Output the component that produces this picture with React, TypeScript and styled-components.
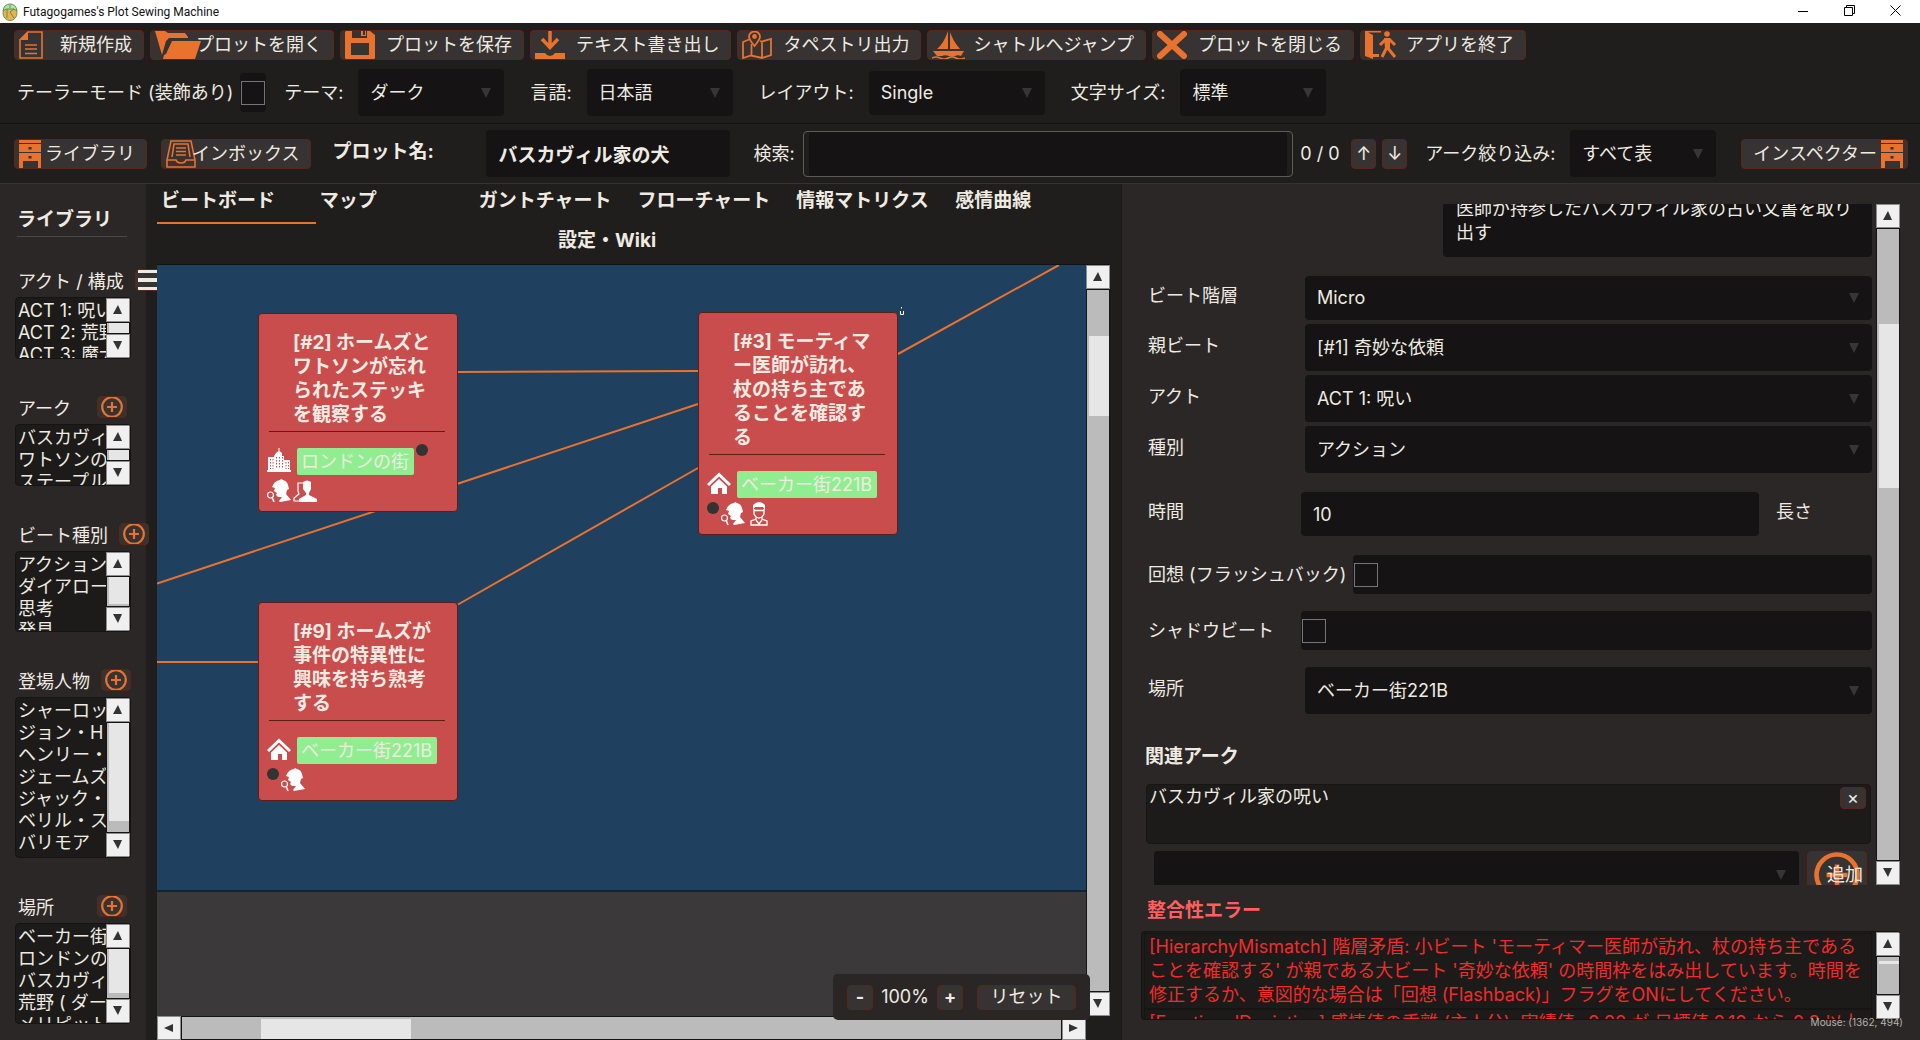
import React from "react";
import styled, { createGlobalStyle, css } from "styled-components";

const color = {
  page: "#1f1e1c",
  panel: "#2b2726",
  field: "#151314",
  list: "#1c1b19",
  button: "#373332",
  buttonEdge: "#5c2614",
  text: "#efebe2",
  accent: "#e8722e",
  board: "#20405f",
  card: "#ca4d4d",
  cardEdge: "#5a2015",
  error: "#f02c2c",
};

const GlobalStyle = createGlobalStyle`
  * { box-sizing: border-box; }
  html, body { margin: 0; height: 100%; background: ${color.page}; }
  body, button, input, select, textarea {
    font-family: Inter, "Noto Sans CJK JP", sans-serif;
    font-size: 18px;
    line-height: 24px;
    color: ${color.text};
  }
  ul { margin: 0; padding: 0; list-style: none; }
  svg { display: block; flex: none; }
`;

/* ---------- shell ---------- */

const Shell = styled.div`
  position: relative;
  display: flex;
  flex-direction: column;
  height: 100vh;
  min-height: 1040px;
  overflow: hidden;
`;

const TitleBar = styled.header`
  display: flex;
  align-items: center;
  gap: 5px;
  height: 23px;
  flex: none;
  padding: 0 2px;
  background: #fff;
`;

const WindowTitle = styled.h1`
  margin: 0;
  flex: 1;
  font: 400 12px/20px Roboto, "Noto Sans", sans-serif;
  color: #111;
`;

const WindowButtons = styled.div`
  display: flex;
`;

const WindowButton = styled.button`
  display: grid;
  place-items: center;
  width: 46px;
  height: 22px;
  padding: 0 0 2px;
  border: 0;
  background: none;
`;

const ButtonBar = styled.nav`
  display: flex;
  flex: none;
  gap: 6px;
  padding: 7px 14px 0;
`;

const SettingsBar = styled.div`
  display: flex;
  flex: none;
  align-items: center;
  gap: 26px;
  padding: 9px 18px 7px;
  border-bottom: 1px solid #121111;
`;

const PlotBar = styled.div`
  display: flex;
  flex: none;
  align-items: center;
  padding: 6px 12px 6px 14px;
  border-bottom: 1px solid #353432;
`;

const Setting = styled.div<{ $gap?: number }>`
  display: flex;
  align-items: center;
  gap: ${(p) => p.$gap ?? 15}px;
`;

const TailorSetting = styled(Setting)`
  margin: 0 -8px 0 -1px;
`;

const Workspace = styled.div`
  display: grid;
  flex: 1;
  min-height: 0;
  grid-template-columns: 146px minmax(0, 975fr) minmax(0, 799fr);
`;

/* ---------- controls ---------- */

const ToolButton = styled.button<{ $pad: number }>`
  display: grid;
  grid-template-columns: ${(p) => p.$pad}px auto;
  align-items: center;
  height: 30px;
  flex: none;
  padding: 0 11px 0 0;
  border: 1px solid ${color.buttonEdge};
  border-radius: 4px;
  background: ${color.button};
  white-space: nowrap;
`;

/* wide icons run on under the caption */
const ToolIcon = styled.span`
  width: 0;
  height: 28px;
  margin-left: 4px;
`;

const InspectorButton = styled.button`
  display: flex;
  align-items: center;
  gap: 4px;
  height: 30px;
  flex: none;
  margin-left: 25px;
  padding: 0 4px 0 11px;
  border: 1px solid ${color.buttonEdge};
  border-radius: 4px;
  background: ${color.button};
  white-space: nowrap;
`;

const SmallButton = styled.button<{ $w: number; $h: number }>`
  display: grid;
  place-content: center;
  flex: none;
  width: ${(p) => p.$w}px;
  height: ${(p) => p.$h}px;
  padding: 0;
  border: 1px solid ${color.buttonEdge};
  border-radius: 4px;
  background: ${color.button};
  overflow: hidden;
`;

const SelectFrame = styled.div<{ $w?: number; $h?: number; $indent?: boolean }>`
  display: grid;
  align-items: center;
  height: ${(p) => p.$h ?? 47}px;
  ${(p) => (p.$w ? css`width: ${p.$w}px; flex: none;` : css`flex: 1; min-width: 0;`)}
  margin-left: ${(p) => (p.$indent ? 4 : 0)}px;
  border-radius: 4px;
  background: ${color.field};
  & > * { grid-area: 1 / 1; }
  & > svg { justify-self: end; margin-right: 13px; pointer-events: none; }
`;

const NativeSelect = styled.select`
  width: 100%;
  height: 100%;
  padding: 0 30px 0 12px;
  border: 0;
  border-radius: 4px;
  appearance: none;
  background: none;
`;

const TextInput = styled.input<{ $bold?: boolean; $w?: number; $h?: number }>`
  height: ${(p) => p.$h ?? 47}px;
  ${(p) => (p.$w ? css`width: ${p.$w}px; flex: none;` : css`flex: 1; min-width: 0;`)}
  padding: 0 12px;
  border: 0;
  border-radius: 4px;
  background: ${color.field};
  ${(p) => p.$bold && css`font-size: 19px; font-weight: 700;`}
`;

const CheckField = styled.span<{ $fill?: boolean }>`
  display: flex;
  align-items: center;
  height: 39px;
  padding: 0 1px;
  border-radius: 4px;
  background: ${color.field};
  ${(p) => p.$fill && css`flex: 1;`}
`;

const Check = styled.input`
  appearance: none;
  width: 24px;
  height: 24px;
  margin: 0;
  border: 1px solid #77757a;
  background: ${color.field};
`;

const PlotLabel = styled.label`
  width: 154px;
  flex: none;
  margin-left: 21px;
  padding-bottom: 4px;
  font-size: 19px;
  font-weight: 700;
`;

const SearchFrame = styled.div`
  display: flex;
  flex: 1;
  min-width: 0;
  height: 46px;
  margin: 0 7px 0 8px;
  padding: 0 5px;
  border: 1px solid #5c5b59;
  border-radius: 4px;
`;

const SearchInput = styled(TextInput)`
  height: 100%;
  border-radius: 2px;
`;

const Matches = styled.output`
  width: 51px;
  flex: none;
`;

const Steps = styled.div`
  display: flex;
  gap: 6px;
  margin-right: 18px;
`;

const SearchLabel = styled.label`
  flex: none;
  margin-left: 23px;
`;

/* ---------- scroll bars ---------- */

const Bar = styled.div<{ $across?: boolean }>`
  display: grid;
  ${(p) =>
    p.$across
      ? css`grid-template-columns: 24px 1fr 24px; height: 24px;`
      : css`grid-template-rows: 24px 1fr 24px; width: 24px;`}
`;

const BarButton = styled.button`
  display: grid;
  place-items: center;
  padding: 0;
  border: 1px solid #8c8c8c;
  background: #f0f0f0;
`;

const Track = styled.div`
  display: grid;
  border: 1px solid #141414;
  background: #bbbbbb;
  min-height: 0;
`;

const Thumb = styled.div`
  background: #e6e6e6;
`;

type ScrollBarProps = { across?: boolean; from: number; to: number };

/* from and to are the thumb's ends, in percent of the track */
function ScrollBar({ across, from, to }: ScrollBarProps) {
  const paths = across
    ? ["M9 1v8L0 5z", "M0 1v8l9-4z"]
    : ["M0 9h9L5 0z", "M0 0h9L5 9z"];
  const thumb = across
    ? { marginLeft: `${from}%`, width: `${to - from}%`, marginTop: 2 }
    : { alignSelf: "start", height: `${to - from}%`, position: "relative" as const, top: `${from}%`, marginLeft: 2 };
  return (
    <Bar $across={across}>
      <BarButton aria-label={across ? "左へ" : "上へ"}>
        <svg width="10" height="10"><path d={paths[0]} fill="#333" /></svg>
      </BarButton>
      <Track><Thumb style={thumb} /></Track>
      <BarButton aria-label={across ? "右へ" : "下へ"}>
        <svg width="10" height="10"><path d={paths[1]} fill="#333" /></svg>
      </BarButton>
    </Bar>
  );
}

/* ---------- icons ---------- */

const Arrow = () => (
  <svg width="10" height="10"><path d="M0 0h10L5 10z" fill="#373637" /></svg>
);

const LogoIcon = () => (
  <svg width="16" height="18" viewBox="0 0 16 18">
    <ellipse cx="8" cy="10" rx="7" ry="7.5" fill="#eeb04f" stroke="#6d9b4c" />
    <path d="M1 8Q2 1 8 1t7 7Q12 5 8 6 4 5 1 8z" fill="#b9dfa8" stroke="#4f9a58" />
    <path d="M5 6v9M8 9l4-3M8 9l4 6M8 2v3" stroke="#4f9a58" fill="none" />
  </svg>
);

const NewIcon = () => (
  <svg width="24" height="28" viewBox="0 0 24 28">
    <path d="M9 1H23V27H1V9z" fill="none" stroke={color.accent} strokeWidth="1.6" />
    <path d="M9 0V9H0z" fill={color.accent} />
    <path d="M6 14H18M6 18H18M6 22.500H18" stroke={color.accent} strokeWidth="1.5" />
  </svg>
);

const OpenIcon = () => (
  <svg width="46" height="28" viewBox="0 0 46 28">
    <path d="M0 0H10L13 2H30L33 6V7H14L11 10 7 24z" fill={color.accent} />
    <path d="M17 10H46L40 28H8L9 24 11 23z" fill={color.accent} />
    <path d="M9 22 14 10" stroke={color.button} strokeWidth="1.500" />
  </svg>
);

const SaveIcon = () => (
  <svg width="30" height="28" viewBox="0 0 30 28">
    <path d="M1 0H7V7H22V0H25L30 4V27L29 28H1L0 27V1z" fill={color.accent} />
    <path d="M16 0H21V5H16z" fill={color.accent} />
    <path d="M18 0H20V4H18z" fill={color.button} />
    <path d="M6 12H24V24H6z" fill={color.button} />
  </svg>
);

const ExportIcon = () => (
  <svg width="30" height="28" viewBox="0 0 30 28">
    <path d="M15 0V16M7 8 15 16.500 23 8" fill="none" stroke={color.accent} strokeWidth="3.500" />
    <path d="M0 22H10Q12 25 15 25T20 22H30V28H0z" fill={color.accent} />
  </svg>
);

const MapIcon = () => (
  <svg width="30" height="28" viewBox="0 0 30 28" fill="none" stroke={color.accent} strokeWidth="1.800">
    <path d="M7 8.500 1 11V27L9 24.500 20 27 29 24V8L20 10.500 18 10M9.500 13V24.500M20 11V27" />
    <path d="M12.500 15Q7 8.500 7 5.500A5.500 5 0 0 1 18 5.500Q18 8.500 12.500 15z" />
    <circle cx="12.500" cy="5.500" r="1.500" fill={color.accent} />
  </svg>
);

const BoatIcon = () => (
  <svg width="33" height="28" viewBox="0 0 33 28">
    <path d="M16 0V18H5Q12 12 16 0zM18 1Q21 10 28 18H18z" fill={color.accent} />
    <path d="M1 20H32L29 25Q26 23.500 23 25 20 26.500 17 25 13 23.500 10 25L5 25z" fill={color.accent} />
    <path d="M0 27Q4 25 8 27T16 27 24 27 33 27" fill="none" stroke={color.accent} strokeWidth="1.500" />
  </svg>
);

const CloseIcon = () => (
  <svg width="30" height="28" viewBox="0 0 30 28">
    <path d="M3 3 27 25M27 3 3 25" stroke={color.accent} strokeWidth="6" strokeLinecap="round" />
  </svg>
);

const ExitIcon = () => (
  <svg width="32" height="28" viewBox="0 0 32 28">
    <path d="M0 0 8 4V28L0 25zM0 0H16V1.500H0zM8 23H14V26H8z" fill={color.accent} />
    <circle cx="22" cy="3" r="2.800" fill={color.accent} />
    <path d="M23 9 22 17M21 8 15 14M24 8 30 14M22 16 17 26M22 16 30 26" stroke={color.accent} strokeWidth="3" fill="none" />
    <path d="M19 7H25L25 17H20z" fill={color.accent} />
  </svg>
);

const CabinetIcon = () => (
  <svg width="22" height="28" viewBox="0 0 22 28">
    <path d="M0 0H22V3H0zM0 4H22V12H0zM0 13H22V28H19V21H4V28H0z" fill={color.accent} />
    <path d="M9.500 7H12.500V9.500H9.500zM9.500 16H12.500V18.500H9.500z" fill={color.button} />
  </svg>
);

const InboxIcon = () => (
  <svg width="30" height="28" viewBox="0 0 30 28" fill="none" stroke={color.accent} strokeWidth="1.600">
    <path d="M5 1H25L29 20V27H1V20z" />
    <path d="M1 20H10Q11 23 15 23T20 20H29M6 17 8 4H22L24 17M10 8H20M10 11.500H20M10 15H20" />
  </svg>
);

const PlusIcon = ({ size = 22 }: { size?: number }) => (
  <svg width={size} height={size} viewBox="0 0 22 22">
    <circle cx="11" cy="11" r="9.800" fill="none" stroke={color.accent} strokeWidth="2.200" />
    <path d="M11 6V16M6 11H16" stroke={color.accent} strokeWidth="2.200" />
  </svg>
);

const MenuIcon = () => (
  <svg width="24" height="20"><path d="M0 0H24V3H0zM0 8H24V12H0zM0 17H24V20H0z" fill={color.text} /></svg>
);

const CityIcon = () => (
  <svg width="24" height="24" viewBox="0 0 24 24">
    <path d="M11.500 0H12.500V3L15 5V8H17V12H23V22H24V24H0V22H1V9H7V8L9 5 11.500 3z" fill="#fff" />
    <path d="M9.500 9V21M12.500 9V21M15.500 9V21M3.500 11V21M6 11V21M19 14V21M21.500 14V21" stroke={color.card} strokeWidth="1" strokeDasharray="1.500 1.500" />
  </svg>
);

const HouseIcon = () => (
  <svg width="24" height="24" viewBox="0 0 24 24">
    <path d="M1 14 12 3.500 23 14" fill="none" stroke="#fff" strokeWidth="3" />
    <path d="M12 8 20 15.500V23H15V17H11V23H4V15.500z" fill="#fff" />
  </svg>
);

const DetectiveIcon = () => (
  <svg width="24" height="24" viewBox="0 0 24 24">
    <path d="M13 1 14 0 16 1Q20 2 21 6L22 10 20 11 19 15 24 21 13 23 12 22 15 18H11L9 16 10 14 7 12 8 9 5 8Q7 2 13 1z" fill="#fff" />
    <circle cx="3.500" cy="16" r="3" fill="none" stroke="#fff" strokeWidth="1.200" />
    <path d="M5 18 7 23" stroke="#fff" strokeWidth="1.500" />
  </svg>
);

const PairIcon = () => (
  <svg width="24" height="24" viewBox="0 0 24 24">
    <path d="M10 4H5V12L6 15 1 19V22H9" fill="none" stroke="#fff" strokeWidth="1.200" />
    <path d="M10 3Q14 0 18 3V10L16 14V16L24 20V23H6V20L13 16V14L10 10z" fill="#fff" />
  </svg>
);

const DoctorIcon = () => (
  <svg width="24" height="24" viewBox="0 0 24 24">
    <path d="M6 8V3Q9 0 12 0T18 3V8L16 5H8z" fill="#fff" />
    <path d="M7 7V12Q9 16 12 16T17 12V7M7 8.500H17M9 15V17L4 19V23H20V19L15 17V15M9 18 12 22 15 18" fill="none" stroke="#fff" strokeWidth="1.300" />
  </svg>
);

/* ---------- library ---------- */

const Library = styled.aside`
  position: relative;
  z-index: 1;
  display: flex;
  flex-direction: column;
  gap: 36px;
  padding: 24px 15px 0;
  background: ${color.panel};
`;

const LibraryTitle = styled.h2`
  width: 110px;
  margin: 0 0 -4px 2px;
  padding: 0 0 4px;
  border-bottom: 1px solid #4a4846;
  font-size: 19px;
  line-height: 24px;
`;

const ListHead = styled.div`
  display: flex;
  gap: 11px;
  height: 28px;
  padding-left: 3px;
  white-space: nowrap;
`;

const ListSection = styled.section`
  padding-bottom: 1px;
`;

const ListName = styled.h3`
  flex: none;
  min-width: 68px;
  margin: 0;
  font-size: 18px;
  font-weight: 400;
  line-height: 26px;
`;

const ListBox = styled.div<{ $h: number }>`
  display: grid;
  grid-template-columns: minmax(0, 1fr) 24px;
  width: 116px;
  height: ${(p) => p.$h}px;
  border: 1px solid #151413;
  border-radius: 4px;
  background: ${color.list};
  overflow: hidden;
`;

const ListItems = styled.ul`
  height: 100%;
  min-height: 0;
  padding: 2px 0 0 2px;
  overflow: hidden;
  white-space: nowrap;
  line-height: 22px;
`;

type Section = { name: string; menu?: boolean; height: number; from: number; to: number; items: string[] };

const sections: Section[] = [
  { name: "アクト / 構成", menu: true, height: 62, from: 0, to: 100, items: ["ACT 1: 呪い", "ACT 2: 荒野", "ACT 3: 魔犬"] },
  { name: "アーク", height: 62, from: 0, to: 100, items: ["バスカヴィル家の呪い", "ワトソンの調査", "ステープルトン"] },
  { name: "ビート種別", height: 81, from: 0, to: 92, items: ["アクション", "ダイアローグ", "思考", "発見"] },
  {
    name: "登場人物", height: 161, from: 0, to: 90,
    items: ["シャーロック", "ジョン・H", "ヘンリー・", "ジェームズ", "ジャック・", "ベリル・ス", "バリモア"],
  },
  { name: "場所", height: 101, from: 0, to: 90, items: ["ベーカー街", "ロンドンの街", "バスカヴィル", "荒野 ( ダー", "メリピット"] },
];

/* ---------- board ---------- */

const BoardPane = styled.main`
  display: flex;
  flex-direction: column;
  min-width: 0;
  min-height: 0;
  padding: 0 11px;
`;

const Tabs = styled.div`
  display: flex;
  flex-wrap: wrap;
  flex: none;
  justify-content: center;
`;

const Tab = styled.button<{ $on?: boolean }>`
  flex: 0 0 calc(100% / 6);
  height: 40px;
  padding: 0 0 4px 4px;
  border: 0;
  border-bottom: 2px solid ${(p) => (p.$on ? color.accent : "transparent")};
  background: none;
  font-size: 19px;
  font-weight: 700;
  text-align: left;
  white-space: nowrap;
`;

const BoardFrame = styled.div`
  position: relative;
  z-index: 2;
  display: grid;
  flex: 1;
  min-height: 0;
  grid-template: minmax(0, 1fr) 24px / minmax(0, 1fr) 24px;
  border-top: 1px solid #121212;
`;

const Viewport = styled.div`
  position: relative;
  overflow: hidden;
  background: #3b3939;
`;

const Board = styled.div`
  position: relative;
  height: 627px;
  border-bottom: 2px solid #142232;
  background: ${color.board};
`;

const Wires = styled.svg`
  position: absolute;
  inset: 0;
  width: 100%;
  height: 100%;
`;

const CardBox = styled.article<{ $x: number; $y: number }>`
  position: absolute;
  left: ${(p) => p.$x}px;
  top: ${(p) => p.$y}px;
  width: 200px;
  padding: 17px 11px 8px 8px;
  border: 1px solid ${color.cardEdge};
  border-radius: 4px;
  background: ${color.card};
`;

const CardTitle = styled.h3`
  margin: 0 1px 0 2px;
  padding: 0 2px 4px 24px;
  border-bottom: 1px solid ${color.cardEdge};
  font-size: 19px;
  line-height: 24px;
  line-break: anywhere;
`;

const CardTags = styled.div`
  display: flex;
  flex-wrap: wrap;
  align-items: flex-start;
  gap: 4px 2px;
  margin-top: 12px;
`;

const Place = styled.span`
  display: flex;
  gap: 6px;
  padding-top: 4px;
`;

const PlaceName = styled.span`
  height: 27px;
  padding: 0 5px 0 4px;
  border-radius: 2px;
  background: #90ee90;
  line-height: 27px;
`;

const Dot = styled.span`
  width: 12px;
  height: 12px;
  border-radius: 50%;
  background: #333;
`;

const ZoomBox = styled.div`
  position: absolute;
  right: 20px;
  bottom: 20px;
  display: flex;
  align-items: center;
  height: 46px;
  padding: 0 14px;
  border-radius: 5px;
  background: #2a2625;
`;

const ZoomValue = styled.output`
  width: 64px;
  text-align: center;
`;

const ZoomButton = styled(SmallButton)`
  font-weight: 700;
`;

const ResetButton = styled(SmallButton)`
  margin-left: 14px;
`;

type CardData = { title: string; x: number; y: number; place: string; icon: React.ReactNode; people: React.ReactNode };

const cards: CardData[] = [
  { title: "[#2] ホームズとワトソンが忘れられたステッキを観察する", x: 101, y: 48, place: "ロンドンの街", icon: <CityIcon />, people: <><DetectiveIcon /><PairIcon /></> },
  { title: "[#3] モーティマー医師が訪れ、杖の持ち主であることを確認する", x: 541, y: 47, place: "ベーカー街221B", icon: <HouseIcon />, people: <><DetectiveIcon /><DoctorIcon /></> },
  { title: "[#9] ホームズが事件の特異性に興味を持ち熟考する", x: 101, y: 337, place: "ベーカー街221B", icon: <HouseIcon />, people: <DetectiveIcon /> },
];

/* ---------- inspector ---------- */

const Inspector = styled.aside`
  display: flex;
  flex-direction: column;
  min-width: 0;
  min-height: 0;
  padding: 20px 20px 20px 0;
  border-left: 1px solid #1a1918;
  background: ${color.panel};
`;

const InspectorScroll = styled.div`
  display: grid;
  grid-template-columns: minmax(0, 1fr) 24px;
  flex: 1;
  min-height: 0;
`;

const FormClip = styled.div`
  min-height: 0;
  overflow: hidden;
`;

const Form = styled.form`
  display: flex;
  flex-direction: column;
  gap: 19px;
  margin-top: -20px;
  padding: 0 4px 0 26px;
`;

const Stack = styled.div<{ $gap: number }>`
  display: flex;
  flex-direction: column;
  gap: ${(p) => p.$gap}px;
`;

const Row = styled.div`
  display: flex;
  align-items: center;
  gap: 7px;
`;

const RowLabel = styled.label<{ $level?: boolean }>`
  flex: none;
  min-width: 146px;
  padding-bottom: ${(p) => (p.$level ? 0 : 4)}px;
  white-space: nowrap;
`;

const LengthLabel = styled.span`
  width: 96px;
  margin-left: 10px;
  padding-bottom: 4px;
`;

const Summary = styled.textarea`
  display: block;
  height: 73px;
  margin-left: 295px;
  padding: 13px 13px 0;
  border: 0;
  border-radius: 4px;
  background: ${color.field};
  resize: none;
  overflow: hidden;
`;

const Related = styled.section`
  margin: 12px 0 0 -3px;
`;

const SubTitle = styled.h3<{ $error?: boolean }>`
  margin: ${(p) => (p.$error ? "14px 0 8px 25px" : "0 0 15px")};
  font-size: 19px;
  line-height: 24px;
  color: ${(p) => (p.$error ? "#ff5f5f" : color.text)};
`;

const RelatedList = styled.div`
  display: flex;
  align-items: flex-start;
  justify-content: space-between;
  height: 60px;
  margin: 0 1px;
  padding: 2px 4px 0 2px;
  border: 1px solid #171615;
  border-radius: 4px;
  background: ${color.list};
  line-height: 20px;
`;

const AddRow = styled.div`
  display: flex;
  gap: 8px;
  margin: 7px 5px 0 9px;
`;

const AddButton = styled.button`
  display: grid;
  align-items: center;
  width: 60px;
  height: 47px;
  padding: 0 3px 0 6px;
  border: 1px solid ${color.buttonEdge};
  border-radius: 4px;
  background: ${color.button};
  & > * { grid-area: 1 / 1; }
  & > span { justify-self: end; }
`;

const ErrorBox = styled.div`
  display: grid;
  grid-template-columns: minmax(0, 1fr) 24px;
  height: 89px;
  flex: none;
  margin-left: 19px;
  border: 1px solid #151413;
  border-right: 0;
  border-radius: 4px;
  background: ${color.list};
  overflow: hidden;
`;

const ErrorList = styled.ul`
  min-height: 0;
  padding: 1px 4px 0 2px;
  overflow: hidden;
`;

const ErrorItem = styled.li`
  padding: 1px 4px;
  border: 1px solid #161514;
  color: ${color.error};
`;

const MouseReadout = styled.div`
  position: absolute;
  right: 17px;
  bottom: 10px;
  font-size: 10px;
  line-height: 16px;
  color: #b5b1aa;
`;

/* ---------- parts ---------- */

type SelectProps = { id: string; value: string; w?: number; h?: number; indent?: boolean; label?: string };

function Select({ id, value, w, h, indent, label }: SelectProps) {
  return (
    <SelectFrame $w={w} $h={h} $indent={indent}>
      <NativeSelect id={id} aria-label={label} defaultValue={value}>
        <option>{value}</option>
      </NativeSelect>
      <Arrow />
    </SelectFrame>
  );
}

const tools: [React.ReactNode, string][] = [
  [<NewIcon />, "新規作成"],
  [<OpenIcon />, "プロットを開く"],
  [<SaveIcon />, "プロットを保存"],
  [<ExportIcon />, "テキスト書き出し"],
  [<MapIcon />, "タペストリ出力"],
  [<BoatIcon />, "シャトルへジャンプ"],
  [<CloseIcon />, "プロットを閉じる"],
  [<ExitIcon />, "アプリを終了"],
];

const settings: [string, string, string, number, number][] = [
  ["theme", "テーマ:", "ダーク", 146, 47],
  ["language", "言語:", "日本語", 146, 47],
  ["layout", "レイアウト:", "Single", 176, 44],
  ["textsize", "文字サイズ:", "標準", 146, 47],
];

const tabs = ["ビートボード", "マップ", "ガントチャート", "フローチャート", "情報マトリクス", "感情曲線", "設定・Wiki"];

const beatFields: [string, string, string, number][] = [
  ["level", "ビート階層", "Micro", 44],
  ["parent", "親ビート", "[#1] 奇妙な依頼", 47],
  ["act", "アクト", "ACT 1: 呪い", 47],
  ["kind", "種別", "アクション", 47],
];

const errors = [
  "[HierarchyMismatch] 階層矛盾: 小ビート 'モーティマー医師が訪れ、杖の持ち主であることを確認する' が親である大ビート '奇妙な依頼' の時間枠をはみ出しています。時間を修正するか、意図的な場合は「回想 (Flashback)」フラグをONにしてください。",
  "[EmotionalDeviation] 感情値の乖離 (主人公): 実績値 -0.20 が 目標値 0.10 から 0.3 以上離れています。",
];

export default function App() {
  return (
    <Shell>
      <GlobalStyle />
      <TitleBar>
        <LogoIcon />
        <WindowTitle>Futagogames's Plot Sewing Machine</WindowTitle>
        <WindowButtons>
          <WindowButton aria-label="最小化">
            <svg width="10" height="10"><path d="M0 5.500H10" stroke="#000" /></svg>
          </WindowButton>
          <WindowButton aria-label="元に戻す">
            <svg width="11" height="11" fill="none" stroke="#000"><path d="M.5 2.500H8.500V10.500H.5zM2.500 2.500V.5H10.500V8.500H8.500" /></svg>
          </WindowButton>
          <WindowButton aria-label="閉じる">
            <svg width="11" height="11" stroke="#000"><path d="M.5.5l10 10M10.500.5l-10 10" /></svg>
          </WindowButton>
        </WindowButtons>
      </TitleBar>

      <ButtonBar>
        {tools.map(([icon, name]) => (
          <ToolButton key={name} $pad={45}>
            <ToolIcon>{icon}</ToolIcon>
            {name}
          </ToolButton>
        ))}
      </ButtonBar>

      <SettingsBar>
        <TailorSetting $gap={7}>
          <label htmlFor="tailor">テーラーモード (装飾あり)</label>
          <CheckField><Check id="tailor" type="checkbox" /></CheckField>
        </TailorSetting>
        {settings.map(([id, name, value, w, h]) => (
          <Setting key={id}>
            <label htmlFor={id}>{name}</label>
            <Select id={id} value={value} w={w} h={h} />
          </Setting>
        ))}
      </SettingsBar>

      <PlotBar>
        <Setting $gap={14}>
          <ToolButton $pad={30}><ToolIcon><CabinetIcon /></ToolIcon>ライブラリ</ToolButton>
          <ToolButton $pad={30}><ToolIcon><InboxIcon /></ToolIcon>インボックス</ToolButton>
        </Setting>
        <PlotLabel htmlFor="plot">プロット名:</PlotLabel>
        <TextInput id="plot" $bold $w={244} defaultValue="バスカヴィル家の犬" />
        <SearchLabel htmlFor="search">検索:</SearchLabel>
        <SearchFrame><SearchInput id="search" /></SearchFrame>
        <Matches>0 / 0</Matches>
        <Steps>
          <SmallButton $w={25} $h={30}>↑</SmallButton>
          <SmallButton $w={25} $h={30}>↓</SmallButton>
        </Steps>
        <Setting>
          <label htmlFor="arc">アーク絞り込み:</label>
          <Select id="arc" value="すべて表" w={146} />
        </Setting>
        <InspectorButton>インスペクター<CabinetIcon /></InspectorButton>
      </PlotBar>

      <Workspace>
        <Library>
          <LibraryTitle>ライブラリ</LibraryTitle>
          {sections.map((s) => (
            <ListSection key={s.name}>
              <ListHead>
                <ListName>{s.name}</ListName>
                <SmallButton $w={30} $h={22} aria-label={s.menu ? "メニュー" : `${s.name}を追加`}>
                  {s.menu ? <MenuIcon /> : <PlusIcon />}
                </SmallButton>
              </ListHead>
              <ListBox $h={s.height}>
                <ListItems>{s.items.map((i) => <li key={i}>{i}</li>)}</ListItems>
                <ScrollBar from={s.from} to={s.to} />
              </ListBox>
            </ListSection>
          ))}
        </Library>

        <BoardPane>
          <Tabs role="tablist">
            {tabs.map((t, i) => (
              <Tab key={t} role="tab" aria-selected={i === 0} $on={i === 0}>{t}</Tab>
            ))}
          </Tabs>
          <BoardFrame>
            <Viewport>
              <Board>
                <Wires stroke={color.accent} strokeWidth="2" fill="none">
                  <path d="M301 107 541 106M0 318.500 541 139M301 339.500 541 203M0 397H101M741 89 902 0" />
                  <path d="M744.500 42V43.500M743.500 46V49.500H746.500V46" stroke="#fff" strokeWidth="1" />
                </Wires>
                {cards.map((c) => (
                  <CardBox key={c.title} $x={c.x} $y={c.y}>
                    <CardTitle>{c.title}</CardTitle>
                    <CardTags>
                      <Place>{c.icon}<PlaceName>{c.place}</PlaceName></Place>
                      <Dot />
                      {c.people}
                    </CardTags>
                  </CardBox>
                ))}
              </Board>
            </Viewport>
            <ScrollBar from={6.5} to={18} />
            <ScrollBar across from={9} to={26} />
            <ZoomBox>
              <ZoomButton $w={26} $h={25}>-</ZoomButton>
              <ZoomValue>100%</ZoomValue>
              <ZoomButton $w={26} $h={25}>+</ZoomButton>
              <ResetButton $w={99} $h={25}>リセット</ResetButton>
            </ZoomBox>
          </BoardFrame>
        </BoardPane>

        <Inspector>
          <InspectorScroll>
            <FormClip>
              <Form>
                <Summary aria-label="概要" defaultValue="医師が持参したバスカヴィル家の古い文書を取り出す" />
                <Stack $gap={4}>
                  {beatFields.map(([id, name, value, h]) => (
                    <Row key={id}>
                      <RowLabel htmlFor={id}>{name}</RowLabel>
                      <Select id={id} value={value} h={h} indent />
                    </Row>
                  ))}
                </Stack>
                <Row>
                  <RowLabel htmlFor="time">時間</RowLabel>
                  <TextInput id="time" $h={44} defaultValue="10" />
                  <LengthLabel>長さ</LengthLabel>
                </Row>
                <Stack $gap={17}>
                  <Row>
                    <RowLabel htmlFor="flashback" $level>回想 (フラッシュバック)</RowLabel>
                    <CheckField $fill><Check id="flashback" type="checkbox" /></CheckField>
                  </Row>
                  <Row>
                    <RowLabel htmlFor="shadow" $level>シャドウビート</RowLabel>
                    <CheckField $fill><Check id="shadow" type="checkbox" /></CheckField>
                  </Row>
                  <Row>
                    <RowLabel htmlFor="place">場所</RowLabel>
                    <Select id="place" value="ベーカー街221B" indent />
                  </Row>
                </Stack>
                <Related>
                  <SubTitle>関連アーク</SubTitle>
                  <RelatedList>
                    <span>バスカヴィル家の呪い</span>
                    <SmallButton type="button" $w={26} $h={22}>×</SmallButton>
                  </RelatedList>
                  <AddRow>
                    <Select id="arcs" label="アーク" value="" />
                    <AddButton type="button"><PlusIcon size={46} /><span>追加</span></AddButton>
                  </AddRow>
                </Related>
              </Form>
            </FormClip>
            <ScrollBar from={15} to={41} />
          </InspectorScroll>
          <SubTitle $error>整合性エラー</SubTitle>
          <ErrorBox>
            <ErrorList>{errors.map((e) => <ErrorItem key={e}>{e}</ErrorItem>)}</ErrorList>
            <ScrollBar from={10} to={20} />
          </ErrorBox>
        </Inspector>
      </Workspace>
      <MouseReadout>Mouse: (1362, 494)</MouseReadout>
    </Shell>
  );
}
